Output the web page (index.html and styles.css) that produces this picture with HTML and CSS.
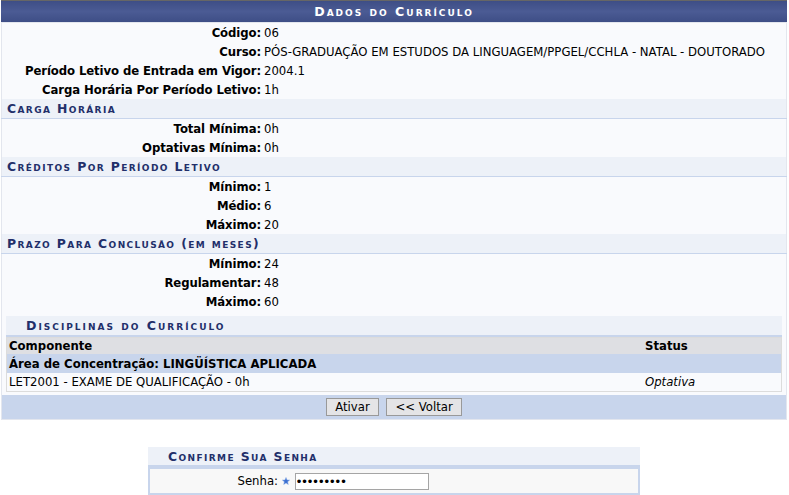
FILE: index.html
```html
<!DOCTYPE html>
<html lang="pt-BR">
<head>
	<meta charset="UTF-8">
	<title>Dados do Currículo</title>
	<link rel="stylesheet" href="styles.css">
</head>
<body>

	<!-- dados do curriculo -->
	<table class="formulario">
		<caption>Dados do Currículo</caption>
		<tbody>
			<tr><th>Código:</th><td>06</td></tr>
			<tr><th>Curso:</th><td>PÓS-GRADUAÇÃO EM ESTUDOS DA LINGUAGEM/PPGEL/CCHLA - NATAL - DOUTORADO</td></tr>
			<tr><th>Período Letivo de Entrada em Vigor:</th><td>2004.1</td></tr>
			<tr><th>Carga Horária Por Período Letivo:</th><td>1h</td></tr>

			<tr><td colspan="2" class="subFormulario">Carga Horária</td></tr>
			<tr><th>Total Mínima:</th><td>0h</td></tr>
			<tr><th>Optativas Mínima:</th><td>0h</td></tr>

			<tr><td colspan="2" class="subFormulario">Créditos Por Período Letivo</td></tr>
			<tr><th>Mínimo:</th><td>1</td></tr>
			<tr><th>Médio:</th><td>6</td></tr>
			<tr><th>Máximo:</th><td>20</td></tr>

			<tr><td colspan="2" class="subFormulario">Prazo Para Conclusão (em meses)</td></tr>
			<tr><th>Mínimo:</th><td>24</td></tr>
			<tr><th>Regulamentar:</th><td>48</td></tr>
			<tr><th>Máximo:</th><td>60</td></tr>

			<tr>
				<td colspan="2" class="interna">
					<table class="subFormulario listagem">
						<caption>Disciplinas do Currículo</caption>
						<thead>
							<tr><th>Componente</th><th class="status">Status</th></tr>
						</thead>
						<tbody>
							<tr class="area"><td colspan="2">Área de Concentração: LINGÜÍSTICA APLICADA</td></tr>
							<tr class="linha"><td>LET2001 - EXAME DE QUALIFICAÇÃO - 0h</td><td class="status"><i>Optativa</i></td></tr>
						</tbody>
					</table>
				</td>
			</tr>
		</tbody>
		<tfoot>
			<tr>
				<td colspan="2">
					<button type="button">Ativar</button>
					<button type="button">&lt;&lt; Voltar</button>
				</td>
			</tr>
		</tfoot>
	</table>

	<!-- confirmacao de senha -->
	<table class="senha">
		<caption>Confirme Sua Senha</caption>
		<tr>
			<th>Senha:</th>
			<td>
				<svg class="obrigatorio" width="8" height="8" viewBox="0 0 10 10"><polygon points="5,0.5 6.3,3.6 9.6,3.8 7.1,6 7.9,9.4 5,7.6 2.1,9.4 2.9,6 0.4,3.8 3.7,3.6" fill="#3b6fd1" stroke="#8fb0e8" stroke-width="0.6"/></svg>
				<input type="password" value="123456789">
			</td>
		</tr>
	</table>

</body>
</html>
```

FILE: styles.css
```css
*{
	margin: 0px;
	padding: 0px;
}
body{
	background-color: #fff;
	font: 11.7px "DejaVu Sans", Verdana, sans-serif;
	color: #000;
	padding: 0px 2px 0px 1px;
}

/*tabela principal*/
.formulario{
	width: 100%;
	border-collapse: collapse;
	background-color: #f9fafd;
	border: 1px solid #e3e6ee;
}
.formulario > caption{
	background: linear-gradient(#3e4e86, #4b5b94 50%, #3e4e86);
	border-top: 1px solid #666;
	color: #fff;
	font-weight: bold;
	font-size: 12.6px;
	font-variant: small-caps;
	letter-spacing: 2px;
	text-align: center;
	height: 21px;
	line-height: 21px;
}
.formulario > tbody > tr > th{
	width: 259px;
	text-align: right;
	font-weight: bold;
	letter-spacing: -0.1px;
	padding: 0px 1px 0px 0px;
	height: 19px;
	white-space: nowrap;
}
.formulario > tbody > tr > td{
	padding: 0px 0px 0px 2px;
	height: 19px;
}
.formulario > tbody > tr > td.subFormulario{
	background-color: #edf1f8;
	border-bottom: 1px solid #c8d5ec;
	color: #222f6a;
	font-weight: bold;
	font-size: 12.4px;
	font-variant: small-caps;
	letter-spacing: 1.4px;
	padding-left: 5px;
	height: 19px;
}

/*disciplinas*/
.formulario > tbody > tr > td.interna{
	padding: 5px 4px 3px 4px;
}
.listagem{
	width: 100%;
	border-collapse: collapse;
	border: 1px solid #dcdcdc;
	background-color: #f9fafd;
}
.listagem caption{
	background-color: #edf1f8;
	border-bottom: 2px solid #c8d5ec;
	color: #222f6a;
	font-weight: bold;
	font-size: 12.6px;
	font-variant: small-caps;
	letter-spacing: 2px;
	text-align: left;
	padding-left: 20px;
	height: 19px;
	line-height: 20px;
}
.listagem thead th{
	background-color: #dedfe3;
	text-align: left;
	font-weight: bold;
	height: 16px;
	padding: 0px 2px;
}
.listagem .status{
	width: 134px;
}
.listagem .area td{
	background-color: #c8d5ec;
	font-weight: bold;
	height: 19px;
	padding: 0px 2px;
}
.listagem .linha td{
	height: 18px;
	padding: 0px 2px;
}

/*rodape com botoes*/
.formulario tfoot td{
	background-color: #c8d5ec;
	text-align: center;
	height: 24px;
}
button{
	font: 11.7px "DejaVu Sans", Verdana, sans-serif;
	background-color: #e4e4e6;
	border: 1px solid #999;
	color: #000;
	height: 18px;
	padding: 0px 8px;
	margin: 0px 2px;
}

/*senha*/
.senha{
	width: 492px;
	margin: 27px auto 0px;
	border-collapse: collapse;
}
.senha caption{
	background-color: #edf1f8;
	border-bottom: 2px solid #c8d5ec;
	color: #222f6a;
	font-weight: bold;
	font-size: 12.4px;
	font-variant: small-caps;
	letter-spacing: 1.4px;
	text-align: left;
	padding-left: 20px;
	height: 18px;
	line-height: 20px;
}
.senha tr{
	background-color: #f8f8f8;
	border: 2px solid #c8d5ec;
}
.senha th{
	width: 128px;
	text-align: right;
	font-weight: normal;
	padding-right: 4px;
	height: 24px;
}
.senha td{
	text-align: left;
}
.obrigatorio{
	vertical-align: middle;
	margin-right: 1px;
}
.senha input{
	box-sizing: border-box;
	width: 134px;
	height: 17px;
	border: 1px solid #a5a5a5;
	font-size: 13px;
	letter-spacing: 1px;
	padding: 0px 1px;
	vertical-align: middle;
}
```
